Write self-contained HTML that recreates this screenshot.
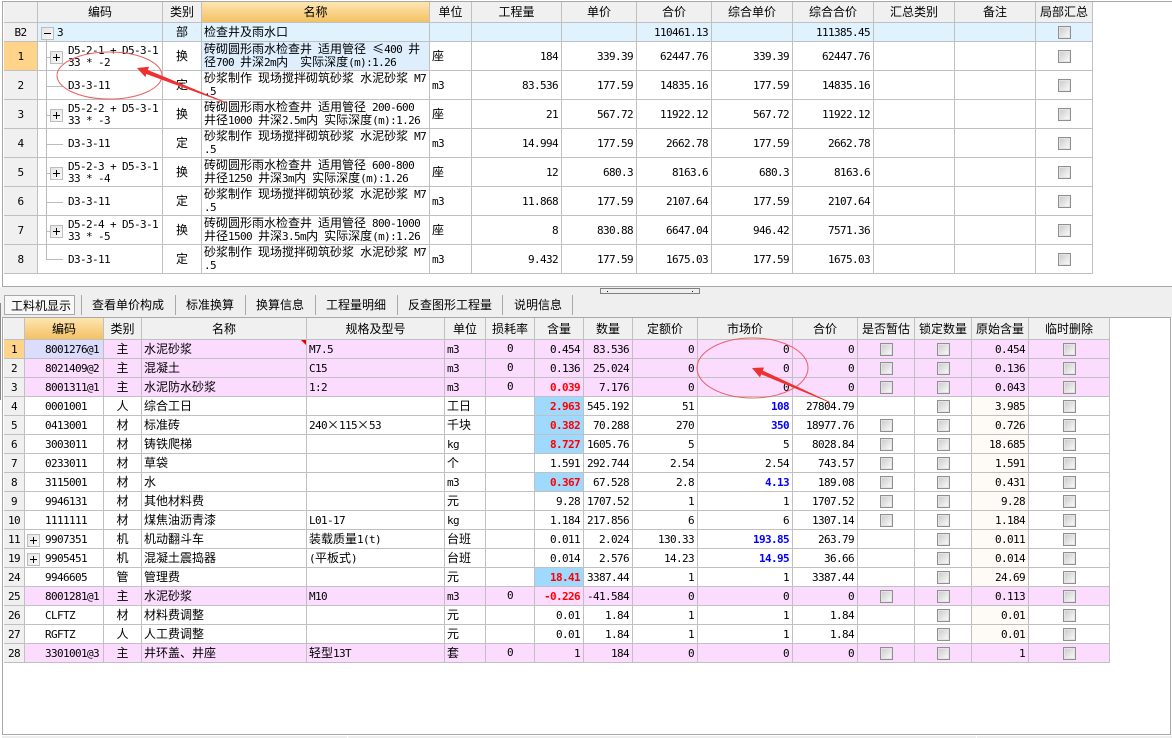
<!DOCTYPE html>
<html lang="zh-CN">
<head>
<meta charset="utf-8">
<title>工料机显示</title>
<style>
html,body{margin:0;padding:0;background:#fff;width:1172px;height:738px;overflow:hidden}
body{position:relative;font:12px/12px "WenQuanYi Zen Hei","Noto Sans CJK SC",sans-serif;color:#000}
.a{position:absolute}
table{position:absolute;border-collapse:separate;border-spacing:0;table-layout:fixed}
td,th{box-sizing:border-box;padding:0 3px 0 2px;border-right:1px solid #c0c0c0;border-bottom:1px solid #c0c0c0;font-weight:normal;white-space:nowrap;overflow:hidden;vertical-align:middle;text-align:left;line-height:12px}
th{background:#f0f0f0;text-align:center;padding:0}
th.s{background:linear-gradient(#fde6b2,#f4c163)}
i{font:normal 11px/12px "DejaVu Sans Mono",monospace;letter-spacing:-.62px;white-space:pre}
s{display:inline-block;width:12px;text-decoration:none;text-align:center}
.n{text-align:right;font:11px/12px "DejaVu Sans Mono",monospace;letter-spacing:-.62px;padding-top:1px}
.m{font:11px/12px "DejaVu Sans Mono",monospace;letter-spacing:-.62px;padding-top:1px}
td.h{background:#f0f0f0;text-align:center;padding:1px 0 0;font:11px/12px "DejaVu Sans Mono",monospace;letter-spacing:-.62px}
td.h.y{background:#fed38a}
.k{text-align:center;padding:0}
.t{padding-left:30px}
.c{padding-left:20px}
.x{display:block;box-sizing:border-box;width:13px;height:13px;margin:0 auto;border:1px solid #8f8f8f;background:linear-gradient(135deg,#c8c8c8,#fdfdfd);box-shadow:inset 0 0 0 1px #e4e4e4}
tr.g td{background:#dff2fd}
tr.g td.h{background:#f0f0f0}
td.l{background:#deeefc}
.r{color:#f00;font-weight:bold}
.u{color:#00f;font-weight:bold}
.w{background:#9fd9fe}
.o{background:#fefaf6}
tr.p td{background:#fcdcfe}
tr.p td.h{background:#f0f0f0}
tr.p td.h.y{background:#fed38a}
tr.p td.v{background:#dcdcfc}
#b tr{height:19px}
#b td{height:19px}
#a td{height:29px}
#a tr.g td{height:19px}
.tab{position:absolute;top:299px;line-height:12px}
.sep{position:absolute;top:295px;width:1px;height:20px;background:#a8a8a8}
.pb{position:absolute;box-sizing:border-box;width:13px;height:13px;border:1px solid #bdbdbd;background:linear-gradient(135deg,#e4e4e4,#f8f8f8)}
.pb:before{content:"";position:absolute;left:2px;top:5px;width:7px;height:1px;background:#000}
.pb.q:after{content:"";position:absolute;left:5px;top:2px;width:1px;height:7px;background:#000}
</style>
</head>
<body>
<div class="a" style="left:2px;top:1px;width:1170px;height:1px;background:#a8a8a8"></div>
<div class="a" style="left:2px;top:1px;width:1px;height:286px;background:#a8a8a8"></div>
<div class="a" style="left:0;top:287px;width:1172px;height:30px;background:#efefef"></div>
<div class="a" style="left:2px;top:286px;width:1170px;height:1px;background:#a8a8a8"></div>
<div class="a" style="left:0;top:303px;width:1px;height:97px;background:#888"></div>

<table id="a" style="left:4px;top:2px;width:1089px">
<colgroup><col style="width:34px"><col style="width:125px"><col style="width:39px"><col style="width:228px"><col style="width:42px"><col style="width:90px"><col style="width:75px"><col style="width:75px"><col style="width:81px"><col style="width:81px"><col style="width:81px"><col style="width:81px"><col style="width:57px"></colgroup>
<tr style="height:21px"><th style="height:21px"></th><th>编码</th><th>类别</th><th class="s">名称</th><th>单位</th><th>工程量</th><th>单价</th><th>合价</th><th>综合单价</th><th>综合合价</th><th>汇总类别</th><th>备注</th><th>局部汇总</th></tr>
<tr class="g" style="height:19px"><td class="h">B2</td><td class="m" style="padding-left:19px">3</td><td class="k">部</td><td>检查井及雨水口</td><td></td><td></td><td></td><td class="n">110461.13</td><td></td><td class="n">111385.45</td><td></td><td></td><td class="k"><span class="x"></span></td></tr>
<tr><td class="h y">1</td><td class="m t">D5-2-1 + D5-3-1<br>33 * -2</td><td class="k">换</td><td class="l">砖砌圆形雨水检查井<i> </i>适用管径<i> </i><s>≤</s><i>400 </i>井<br>径<i>700 </i>井深<i>2m</i>内<i>  </i>实际深度<i>(m):1.26</i></td><td>座</td><td class="n">184</td><td class="n">339.39</td><td class="n">62447.76</td><td class="n">339.39</td><td class="n">62447.76</td><td></td><td></td><td class="k"><span class="x"></span></td></tr>
<tr><td class="h">2</td><td class="m t">D3-3-11</td><td class="k">定</td><td>砂浆制作<i> </i>现场搅拌砌筑砂浆<i> </i>水泥砂浆<i> M7</i><br><i>.5</i></td><td><i>m3</i></td><td class="n">83.536</td><td class="n">177.59</td><td class="n">14835.16</td><td class="n">177.59</td><td class="n">14835.16</td><td></td><td></td><td class="k"><span class="x"></span></td></tr>
<tr><td class="h">3</td><td class="m t">D5-2-2 + D5-3-1<br>33 * -3</td><td class="k">换</td><td>砖砌圆形雨水检查井<i> </i>适用管径<i> 200-600</i><br>井径<i>1000 </i>井深<i>2.5m</i>内<i> </i>实际深度<i>(m):1.26</i></td><td>座</td><td class="n">21</td><td class="n">567.72</td><td class="n">11922.12</td><td class="n">567.72</td><td class="n">11922.12</td><td></td><td></td><td class="k"><span class="x"></span></td></tr>
<tr><td class="h">4</td><td class="m t">D3-3-11</td><td class="k">定</td><td>砂浆制作<i> </i>现场搅拌砌筑砂浆<i> </i>水泥砂浆<i> M7</i><br><i>.5</i></td><td><i>m3</i></td><td class="n">14.994</td><td class="n">177.59</td><td class="n">2662.78</td><td class="n">177.59</td><td class="n">2662.78</td><td></td><td></td><td class="k"><span class="x"></span></td></tr>
<tr><td class="h">5</td><td class="m t">D5-2-3 + D5-3-1<br>33 * -4</td><td class="k">换</td><td>砖砌圆形雨水检查井<i> </i>适用管径<i> 600-800</i><br>井径<i>1250 </i>井深<i>3m</i>内<i> </i>实际深度<i>(m):1.26</i></td><td>座</td><td class="n">12</td><td class="n">680.3</td><td class="n">8163.6</td><td class="n">680.3</td><td class="n">8163.6</td><td></td><td></td><td class="k"><span class="x"></span></td></tr>
<tr><td class="h">6</td><td class="m t">D3-3-11</td><td class="k">定</td><td>砂浆制作<i> </i>现场搅拌砌筑砂浆<i> </i>水泥砂浆<i> M7</i><br><i>.5</i></td><td><i>m3</i></td><td class="n">11.868</td><td class="n">177.59</td><td class="n">2107.64</td><td class="n">177.59</td><td class="n">2107.64</td><td></td><td></td><td class="k"><span class="x"></span></td></tr>
<tr><td class="h">7</td><td class="m t">D5-2-4 + D5-3-1<br>33 * -5</td><td class="k">换</td><td>砖砌圆形雨水检查井<i> </i>适用管径<i> 800-1000</i><br>井径<i>1500 </i>井深<i>3.5m</i>内<i> </i>实际深度<i>(m):1.26</i></td><td>座</td><td class="n">8</td><td class="n">830.88</td><td class="n">6647.04</td><td class="n">946.42</td><td class="n">7571.36</td><td></td><td></td><td class="k"><span class="x"></span></td></tr>
<tr><td class="h">8</td><td class="m t">D3-3-11</td><td class="k">定</td><td>砂浆制作<i> </i>现场搅拌砌筑砂浆<i> </i>水泥砂浆<i> M7</i><br><i>.5</i></td><td><i>m3</i></td><td class="n">9.432</td><td class="n">177.59</td><td class="n">1675.03</td><td class="n">177.59</td><td class="n">1675.03</td><td></td><td></td><td class="k"><span class="x"></span></td></tr>
</table>

<div class="a" style="left:600px;top:288px;width:100px;height:6px;box-sizing:border-box;border:1px solid #808080;background:#efefef"></div>
<div class="a" style="left:607px;top:291px;width:1px;height:1px;background:#000080"></div>
<div class="a" style="left:692px;top:291px;width:1px;height:1px;background:#000080"></div>

<div class="a" style="left:4px;top:295px;width:71px;height:20px;box-sizing:border-box;border:1px solid #a8a8a8;background:#f8f8f8"></div>
<div class="tab" style="left:11px;top:300px">工料机显示</div>
<div class="sep" style="left:81px"></div><div class="tab" style="left:92px">查看单价构成</div>
<div class="sep" style="left:175px"></div><div class="tab" style="left:186px">标准换算</div>
<div class="sep" style="left:245px"></div><div class="tab" style="left:256px">换算信息</div>
<div class="sep" style="left:315px"></div><div class="tab" style="left:326px">工程量明细</div>
<div class="sep" style="left:397px"></div><div class="tab" style="left:408px">反查图形工程量</div>
<div class="sep" style="left:502px"></div><div class="tab" style="left:514px">说明信息</div>
<div class="sep" style="left:572px"></div>

<div class="a" style="left:2px;top:317px;width:1169px;height:418px;box-sizing:border-box;border:1px solid #a8a8a8;background:#fff"></div>
<div class="a" style="left:2px;top:736px;width:345px;height:2px;background:#eee"></div>
<div class="a" style="left:348px;top:736px;width:628px;height:2px;background:#eee"></div>
<div class="a" style="left:977px;top:736px;width:195px;height:2px;background:#eee"></div>

<table id="b" style="left:4px;top:318px;width:1106px">
<colgroup><col style="width:21px"><col style="width:79px"><col style="width:38px"><col style="width:165px"><col style="width:138px"><col style="width:41px"><col style="width:49px"><col style="width:49px"><col style="width:49px"><col style="width:65px"><col style="width:95px"><col style="width:65px"><col style="width:57px"><col style="width:57px"><col style="width:57px"><col style="width:81px"></colgroup>
<tr style="height:22px"><th style="height:22px"></th><th class="s">编码</th><th>类别</th><th>名称</th><th>规格及型号</th><th>单位</th><th>损耗率</th><th>含量</th><th>数量</th><th>定额价</th><th>市场价</th><th>合价</th><th>是否暂估</th><th>锁定数量</th><th>原始含量</th><th>临时删除</th></tr>
<tr class="p"><td class="h y">1</td><td class="m c v">8001276@1</td><td class="k">主</td><td>水泥砂浆</td><td class="m">M7.5</td><td><i>m3</i></td><td class="k m">0</td><td class="n">0.454</td><td class="n">83.536</td><td class="n">0</td><td class="n">0</td><td class="n">0</td><td class="k"><span class="x"></span></td><td class="k"><span class="x"></span></td><td class="n">0.454</td><td class="k"><span class="x"></span></td></tr>
<tr class="p"><td class="h">2</td><td class="m c">8021409@2</td><td class="k">主</td><td>混凝土</td><td class="m">C15</td><td><i>m3</i></td><td class="k m">0</td><td class="n">0.136</td><td class="n">25.024</td><td class="n">0</td><td class="n">0</td><td class="n">0</td><td class="k"><span class="x"></span></td><td class="k"><span class="x"></span></td><td class="n">0.136</td><td class="k"><span class="x"></span></td></tr>
<tr class="p"><td class="h">3</td><td class="m c">8001311@1</td><td class="k">主</td><td>水泥防水砂浆</td><td class="m">1:2</td><td><i>m3</i></td><td class="k m">0</td><td class="n r">0.039</td><td class="n">7.176</td><td class="n">0</td><td class="n">0</td><td class="n">0</td><td class="k"><span class="x"></span></td><td class="k"><span class="x"></span></td><td class="n">0.043</td><td class="k"><span class="x"></span></td></tr>
<tr><td class="h">4</td><td class="m c">0001001</td><td class="k">人</td><td>综合工日</td><td></td><td>工日</td><td></td><td class="n r w">2.963</td><td class="n">545.192</td><td class="n">51</td><td class="n u">108</td><td class="n">27804.79</td><td></td><td class="k"><span class="x"></span></td><td class="n o">3.985</td><td class="k"><span class="x"></span></td></tr>
<tr><td class="h">5</td><td class="m c">0413001</td><td class="k">材</td><td>标准砖</td><td><i>240</i><s>×</s><i>115</i><s>×</s><i>53</i></td><td>千块</td><td></td><td class="n r w">0.382</td><td class="n">70.288</td><td class="n">270</td><td class="n u">350</td><td class="n">18977.76</td><td class="k"><span class="x"></span></td><td class="k"><span class="x"></span></td><td class="n o">0.726</td><td class="k"><span class="x"></span></td></tr>
<tr><td class="h">6</td><td class="m c">3003011</td><td class="k">材</td><td>铸铁爬梯</td><td></td><td><i>kg</i></td><td></td><td class="n r w">8.727</td><td class="n">1605.76</td><td class="n">5</td><td class="n">5</td><td class="n">8028.84</td><td class="k"><span class="x"></span></td><td class="k"><span class="x"></span></td><td class="n o">18.685</td><td class="k"><span class="x"></span></td></tr>
<tr><td class="h">7</td><td class="m c">0233011</td><td class="k">材</td><td>草袋</td><td></td><td>个</td><td></td><td class="n">1.591</td><td class="n">292.744</td><td class="n">2.54</td><td class="n">2.54</td><td class="n">743.57</td><td class="k"><span class="x"></span></td><td class="k"><span class="x"></span></td><td class="n o">1.591</td><td class="k"><span class="x"></span></td></tr>
<tr><td class="h">8</td><td class="m c">3115001</td><td class="k">材</td><td>水</td><td></td><td><i>m3</i></td><td></td><td class="n r w">0.367</td><td class="n">67.528</td><td class="n">2.8</td><td class="n u">4.13</td><td class="n">189.08</td><td class="k"><span class="x"></span></td><td class="k"><span class="x"></span></td><td class="n o">0.431</td><td class="k"><span class="x"></span></td></tr>
<tr><td class="h">9</td><td class="m c">9946131</td><td class="k">材</td><td>其他材料费</td><td></td><td>元</td><td></td><td class="n">9.28</td><td class="n">1707.52</td><td class="n">1</td><td class="n">1</td><td class="n">1707.52</td><td class="k"><span class="x"></span></td><td class="k"><span class="x"></span></td><td class="n o">9.28</td><td class="k"><span class="x"></span></td></tr>
<tr><td class="h">10</td><td class="m c">1111111</td><td class="k">材</td><td>煤焦油沥青漆</td><td class="m">L01-17</td><td><i>kg</i></td><td></td><td class="n">1.184</td><td class="n">217.856</td><td class="n">6</td><td class="n">6</td><td class="n">1307.14</td><td class="k"><span class="x"></span></td><td class="k"><span class="x"></span></td><td class="n o">1.184</td><td class="k"><span class="x"></span></td></tr>
<tr><td class="h">11</td><td class="m c">9907351</td><td class="k">机</td><td>机动翻斗车</td><td>装载质量<i>1(t)</i></td><td>台班</td><td></td><td class="n">0.011</td><td class="n">2.024</td><td class="n">130.33</td><td class="n u">193.85</td><td class="n">263.79</td><td></td><td class="k"><span class="x"></span></td><td class="n o">0.011</td><td class="k"><span class="x"></span></td></tr>
<tr><td class="h">19</td><td class="m c">9905451</td><td class="k">机</td><td>混凝土震捣器</td><td><i>(</i>平板式<i>)</i></td><td>台班</td><td></td><td class="n">0.014</td><td class="n">2.576</td><td class="n">14.23</td><td class="n u">14.95</td><td class="n">36.66</td><td></td><td class="k"><span class="x"></span></td><td class="n o">0.014</td><td class="k"><span class="x"></span></td></tr>
<tr><td class="h">24</td><td class="m c">9946605</td><td class="k">管</td><td>管理费</td><td></td><td>元</td><td></td><td class="n r w">18.41</td><td class="n">3387.44</td><td class="n">1</td><td class="n">1</td><td class="n">3387.44</td><td></td><td class="k"><span class="x"></span></td><td class="n o">24.69</td><td class="k"><span class="x"></span></td></tr>
<tr class="p"><td class="h">25</td><td class="m c">8001281@1</td><td class="k">主</td><td>水泥砂浆</td><td class="m">M10</td><td><i>m3</i></td><td class="k m">0</td><td class="n r">-0.226</td><td class="n">-41.584</td><td class="n">0</td><td class="n">0</td><td class="n">0</td><td class="k"><span class="x"></span></td><td class="k"><span class="x"></span></td><td class="n">0.113</td><td class="k"><span class="x"></span></td></tr>
<tr><td class="h">26</td><td class="m c">CLFTZ</td><td class="k">材</td><td>材料费调整</td><td></td><td>元</td><td></td><td class="n">0.01</td><td class="n">1.84</td><td class="n">1</td><td class="n">1</td><td class="n">1.84</td><td></td><td class="k"><span class="x"></span></td><td class="n o">0.01</td><td class="k"><span class="x"></span></td></tr>
<tr><td class="h">27</td><td class="m c">RGFTZ</td><td class="k">人</td><td>人工费调整</td><td></td><td>元</td><td></td><td class="n">0.01</td><td class="n">1.84</td><td class="n">1</td><td class="n">1</td><td class="n">1.84</td><td></td><td class="k"><span class="x"></span></td><td class="n o">0.01</td><td class="k"><span class="x"></span></td></tr>
<tr class="p"><td class="h">28</td><td class="m c">3301001@3</td><td class="k">主</td><td>井环盖、井座</td><td>轻型<i>13T</i></td><td>套</td><td class="k m">0</td><td class="n">1</td><td class="n">184</td><td class="n">0</td><td class="n">0</td><td class="n">0</td><td class="k"><span class="x"></span></td><td class="k"><span class="x"></span></td><td class="n">1</td><td class="k"><span class="x"></span></td></tr>
</table>

<svg class="a" style="left:0;top:0" width="1172" height="738" viewBox="0 0 1172 738">
<g stroke="#bbb" stroke-width="1" fill="none" shape-rendering="crispEdges">
<path d="M46.5 39V259.5M46 57.5h4M46 86.5h17M46 115.5h4M46 144.5h17M46 173.5h4M46 202.5h17M46 231.5h4M46 259.5h17"/>
</g>
<polygon points="301,340 306,340 306,345" fill="#e00000"/>
<ellipse cx="109.5" cy="75.5" rx="52.5" ry="23.5" fill="none" stroke="#ee5f5f" stroke-width="1"/>
<polygon points="137,68 149.1,66.8 147.8,70 227,102.6 227,103.4 146.2,74 145.5,77.2" fill="#ef3030"/>
<ellipse cx="752.5" cy="368" rx="55.5" ry="30" fill="none" stroke="#ee5f5f" stroke-width="1"/>
<polygon points="752,368 764,367.5 762.8,370.6 830,402 830,402.8 761.2,374.3 760,377.5" fill="#ef3030"/>
</svg>

<div class="pb" style="left:41px;top:27px"></div>
<div class="pb q" style="left:50px;top:51px"></div>
<div class="pb q" style="left:50px;top:109px"></div>
<div class="pb q" style="left:50px;top:167px"></div>
<div class="pb q" style="left:50px;top:225px"></div>
<div class="pb q" style="left:27px;top:534px"></div>
<div class="pb q" style="left:27px;top:553px"></div>
</body>
</html>
